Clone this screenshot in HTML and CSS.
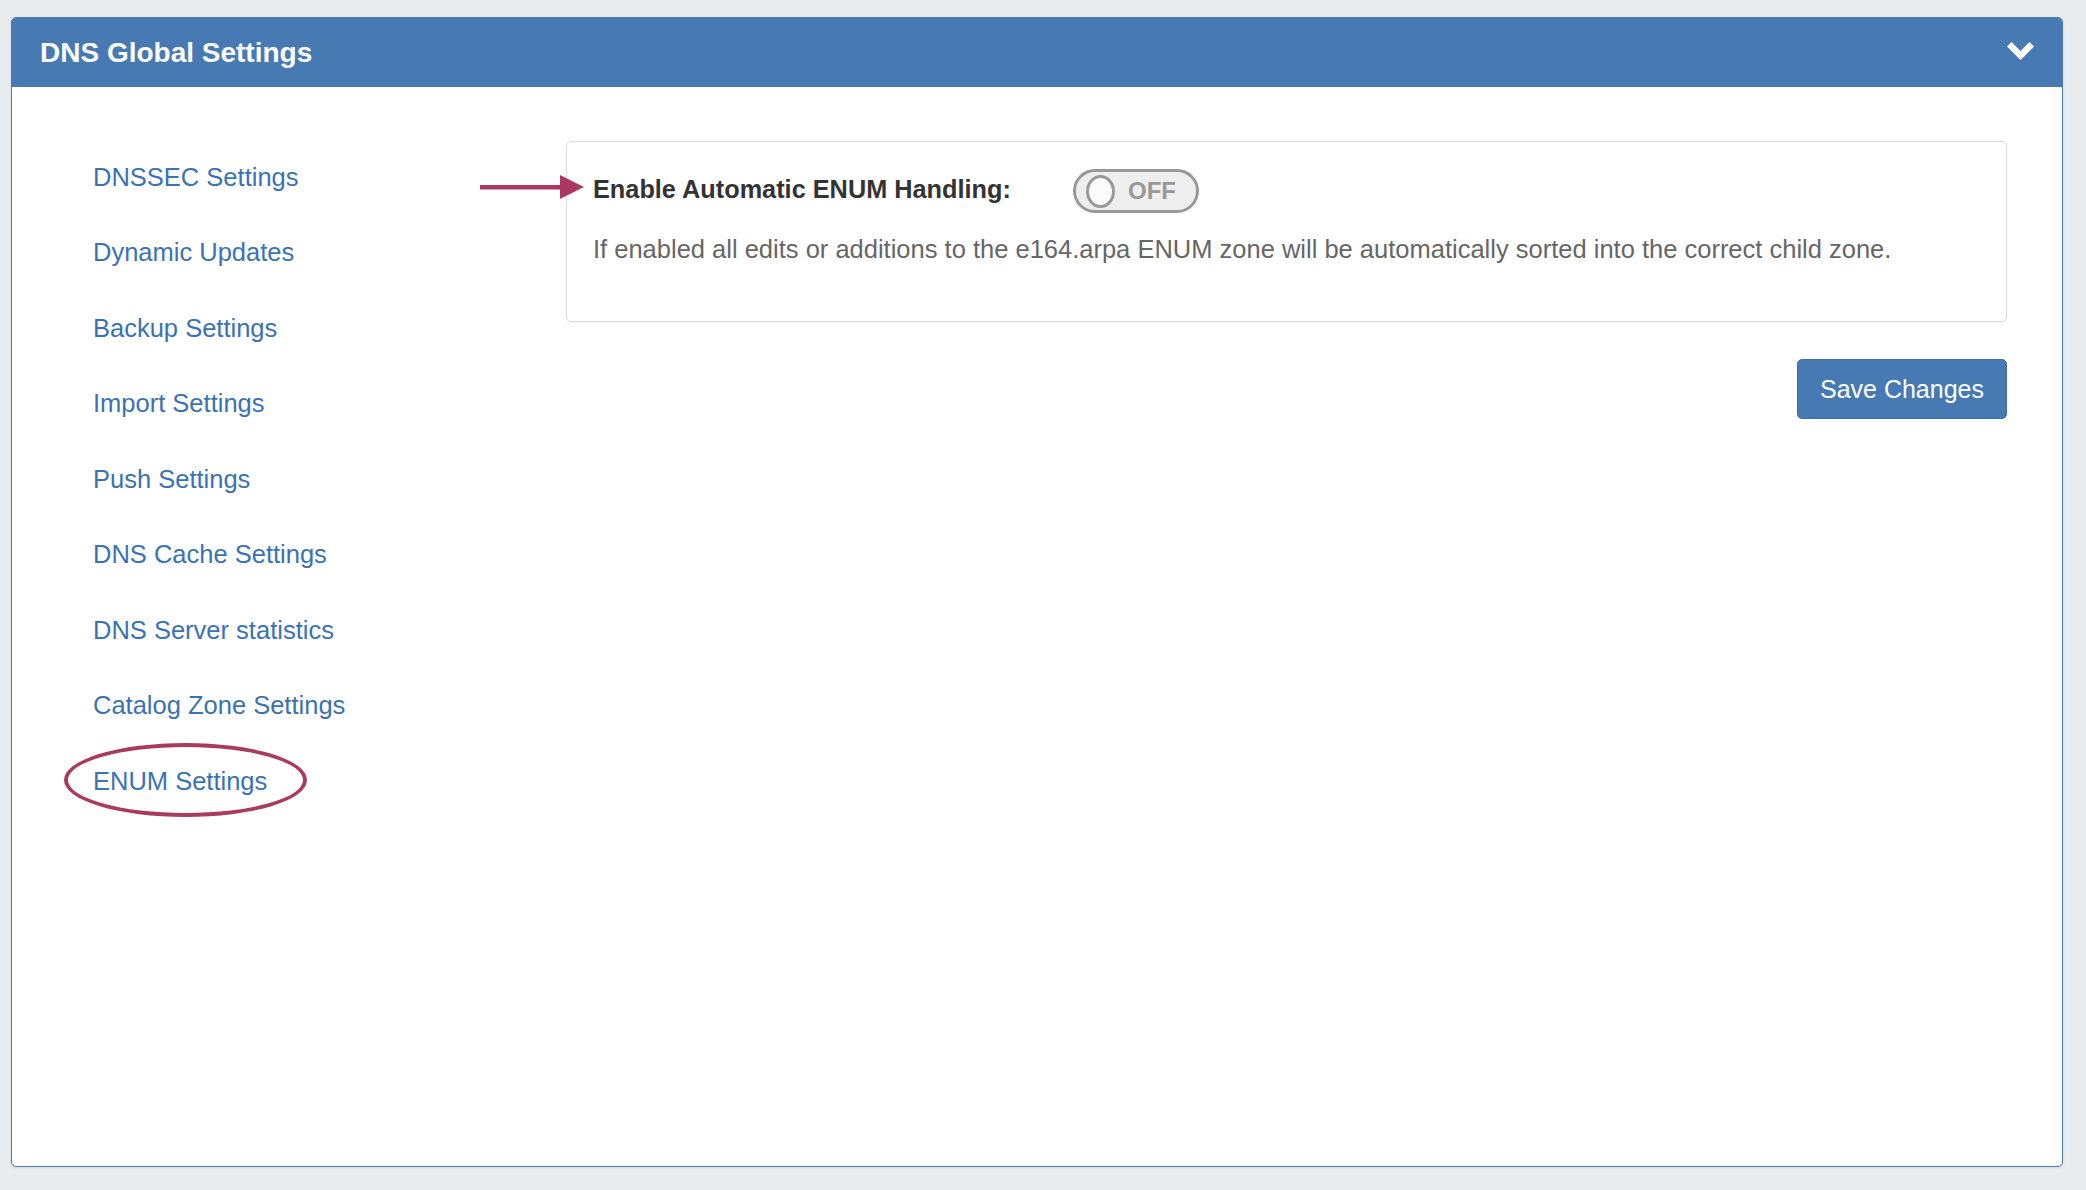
FILE: index.html
```html
<!DOCTYPE html>
<html>
<head>
<meta charset="utf-8">
<title>DNS Global Settings</title>
<link rel="stylesheet" href="styles.css">
</head>
<body>
<div class="panel">
  <div class="panel-heading">
    <h1 class="panel-title">DNS Global Settings</h1>
    <svg class="chevron" viewBox="0 0 27 18" width="27" height="18"><polygon points="0,4.6 4.6,0 13.5,8.9 22.4,0 27,4.6 13.5,18" fill="#fff"/></svg>
  </div>
  <div class="panel-body">
    <ul class="side-nav">
      <li><a href="#">DNSSEC Settings</a></li>
      <li><a href="#">Dynamic Updates</a></li>
      <li><a href="#">Backup Settings</a></li>
      <li><a href="#">Import Settings</a></li>
      <li><a href="#">Push Settings</a></li>
      <li><a href="#">DNS Cache Settings</a></li>
      <li><a href="#">DNS Server statistics</a></li>
      <li><a href="#">Catalog Zone Settings</a></li>
      <li class="active"><a href="#">ENUM Settings</a><span class="circle-mark"></span></li>
    </ul>
    <div class="content">
      <div class="card">
        <svg class="arrow-mark" viewBox="0 0 104 24" width="104" height="24"><rect x="0" y="10" width="84" height="4.5" fill="#ac3862"/><polygon points="80,0 104,12 80,24" fill="#ac3862"/></svg>
        <div class="setting-row">
          <label class="setting-label">Enable Automatic ENUM Handling:</label>
          <div class="toggle"><span class="knob"></span><span class="toggle-text">OFF</span></div>
        </div>
        <p class="help">If enabled all edits or additions to the e164.arpa ENUM zone will be automatically sorted into the correct child zone.</p>
      </div>
      <div class="actions">
        <button class="btn-primary" type="button">Save Changes</button>
      </div>
    </div>
  </div>
</div>
</body>
</html>
```
FILE: styles.css
```css
* { box-sizing: border-box; }
html, body { margin: 0; padding: 0; }
body {
  background: #e9ecef;
  font-family: "Liberation Sans", Arial, Helvetica, sans-serif;
  padding: 17px 23px 23px 11px;
  height: 1190px;
}
.panel {
  width: 2052px;
  height: 1150px;
  background: #fff;
  border: 1px solid #4a7ab4;
  border-radius: 5px;
  box-shadow: 0 1px 3px rgba(0,0,0,0.08);
  overflow: hidden;
  display: flex;
  flex-direction: column;
}
.panel-heading {
  background: #477ab3;
  height: 69px;
  display: flex;
  align-items: center;
  justify-content: space-between;
  padding: 0 28px 0 28px;
  flex: none;
}
.panel-title {
  margin: 0;
  color: #fff;
  font-size: 28px;
  font-weight: bold;
  line-height: 34px;
  padding-top: 1px;
}
.chevron { display: block; margin-bottom: 4px; }
.panel-body {
  flex: 1;
  display: flex;
  padding: 0 55px 0 0;
}
.side-nav {
  list-style: none;
  margin: 0;
  padding: 52px 0 0 81px;
  width: 554px;
  flex: none;
}
.side-nav li {
  position: relative;
  height: 75.5px;
  display: flex;
  align-items: center;
}
.side-nav a {
  color: #3a72b4;
  text-decoration: none;
  font-size: 25.5px;
  line-height: 30px;
}
.circle-mark {
  position: absolute;
  left: -29px;
  top: 0;
  width: 243px;
  height: 74px;
  border: 4px solid #a93a60;
  border-radius: 50%;
  pointer-events: none;
}
.content {
  flex: 1;
  padding-top: 54px;
}
.card {
  position: relative;
  border: 1px solid #dcdcdc;
  border-radius: 5px;
  box-shadow: 0 1px 2px rgba(0,0,0,0.06);
  padding: 27px 25px 0 26px;
  height: 181px;
}
.arrow-mark {
  position: absolute;
  left: -87px;
  top: 33px;
}
.setting-row {
  display: flex;
  align-items: center;
  height: 44px;
}
.setting-label {
  width: 480px;
  font-size: 25.3px;
  font-weight: bold;
  color: #333;
  line-height: 30px;
  margin-top: -5px;
}
.toggle {
  width: 126px;
  height: 44px;
  border: 3px solid #999;
  border-radius: 23px;
  background: #eeeeee;
  display: flex;
  align-items: center;
  padding-left: 10px;
}
.knob {
  width: 29px;
  height: 33px;
  border: 3px solid #999;
  border-radius: 50%;
  background: #fbfbfb;
  flex: none;
}
.toggle-text {
  margin-left: 13px;
  font-size: 24px;
  font-weight: bold;
  color: #999;
  line-height: 26px;
}
.help {
  margin: 21px 0 0 0;
  font-size: 25.5px;
  line-height: 30px;
  color: #666;
}
.actions {
  display: flex;
  justify-content: flex-end;
  margin-top: 37px;
}
.btn-primary {
  background: #477ab3;
  color: #fff;
  border: 1px solid #3f6fa6;
  border-radius: 5px;
  height: 60px;
  padding: 0 22px;
  font-family: "Liberation Sans", Arial, Helvetica, sans-serif;
  font-size: 25px;
  line-height: 30px;
}
```
